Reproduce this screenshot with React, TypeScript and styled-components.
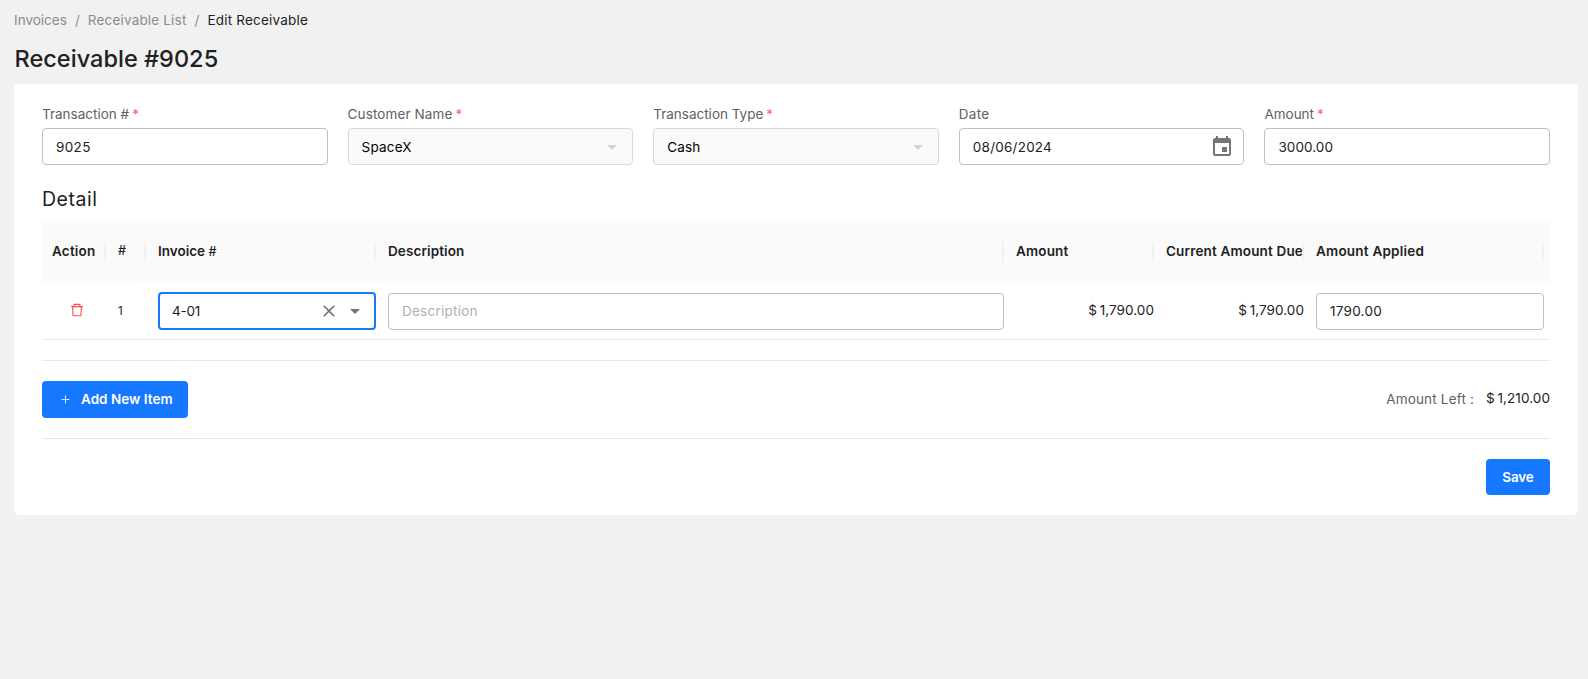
import React from 'react';
import styled, { createGlobalStyle, css } from 'styled-components';

const GlobalStyle = createGlobalStyle`
  * { box-sizing: border-box; }
  body {
    margin: 0;
    background: #f1f1f1;
    color: #212121;
    font-family: Inter, "Liberation Sans", sans-serif;
    font-size: 13.5px;
    line-height: 20px;
  }
`;

const Text = styled.span<{ $track?: number }>`
  letter-spacing: ${({ $track = 0 }) => $track}px;
  white-space: nowrap;
`;

const Page = styled.div`
  min-height: 679px;
  padding: 10px 10px 0 14px;
`;

const Breadcrumb = styled.nav`
  display: flex;
  height: 20px;
  color: #8c8c8c;
`;

const Separator = styled.span`
  width: 21px;
  text-align: center;
`;

const Current = styled(Text)`
  color: #212121;
`;

const Title = styled.h1`
  margin: 12px 0 0;
  padding-left: 0.5px;
  height: 42px;
  font-size: 23.5px;
  font-weight: 500;
  line-height: 33px;
  letter-spacing: 0.03px;
`;

const Card = styled.main`
  display: flex;
  flex-direction: column;
  height: 431px;
  padding: 20px 28px;
  border-radius: 5px;
  background: #fff;
`;

const FieldRow = styled.div`
  display: grid;
  grid-template-columns: repeat(5, 1fr);
  gap: 20px;
`;

const Field = styled.div`
  display: flex;
  flex-direction: column;
  gap: 4px;
`;

const Label = styled.label`
  display: flex;
  gap: 3px;
  height: 20px;
  color: #616161;
`;

const Required = styled.span`
  color: #ff6166;
`;

const Control = styled.div<{ $state?: 'disabled' | 'focused'; $raised?: boolean; $end?: number }>`
  display: flex;
  align-items: center;
  justify-content: space-between;
  height: 37px;
  padding: 0 ${({ $end = 8 }) => $end}px ${({ $raised }) => ($raised ? 2 : 0)}px 13px;
  border: 1px solid #bfbfbf;
  border-radius: 4px;
  background: #fff;
  ${({ $state }) => $state === 'disabled' && css`
    border-color: #d9d9d9;
    background: #fafafa;
    color: #000;
  `}
  ${({ $state }) => $state === 'focused' && css`
    height: 38px;
    margin-top: -1px;
    padding: 0 7px 0 12px;
    border: 2px solid #1677ff;
  `}
`;

const Icons = styled.span<{ $muted?: boolean }>`
  display: flex;
  align-items: center;
  gap: 4px;
  color: ${({ $muted }) => ($muted ? '#d3d3d3' : '#757575')};
`;

const Placeholder = styled(Text)`
  color: #b0b0b0;
`;

const SectionTitle = styled.h2`
  margin: 21px 0 0;
  height: 35px;
  font-size: 19.5px;
  font-weight: 400;
  line-height: 26px;
  letter-spacing: 0.55px;
`;

const columns = '64px 40px 230px 628px 150px 150px 1fr';

const HeaderRow = styled.div`
  display: grid;
  grid-template-columns: ${columns};
  align-items: center;
  height: 62px;
  padding-right: 6px;
  background: #fafafa;
  font-weight: 600;
`;

const HeaderCell = styled.div<{ $pad?: number }>`
  display: flex;
  align-items: flex-start;
  height: 20px;
  min-width: 0;
  overflow: hidden;
  padding-left: ${({ $pad = 12 }) => $pad}px;
  border-right: 2px solid #f1f1f1;
  line-height: 18px;
`;

const Hash = styled.span`
  font-size: 12.5px;
  font-weight: 500;
`;

const BodyRow = styled.div`
  display: grid;
  grid-template-columns: ${columns};
  height: 57px;
  padding: 10px 6px 0 0;
  border-bottom: 1px solid #ececec;
`;

const Cell = styled.div`
  padding-left: 12px;
`;

const ActionCell = styled.div`
  display: flex;
  justify-content: center;
  height: 34px;
  padding-left: 6px;
  align-items: center;
  color: #ff4d4f;
`;

const NumberCell = styled.div`
  padding: 8px 0 0 12px;
  font-size: 11.5px;
`;

const Money = styled(Text)`
  word-spacing: -1.2px;
`;

const MoneyCell = styled.div`
  padding-top: 7px;
  text-align: right;
`;

const Divider = styled.hr`
  width: 100%;
  height: 1px;
  margin: 20px 0;
  border: 0;
  background: #e6e8ee;
`;

const ActionBar = styled.div`
  display: flex;
  align-items: center;
  justify-content: space-between;
  height: 37px;
`;

const AddButton = styled.button`
  display: flex;
  align-items: center;
  gap: 11px;
  width: 146px;
  height: 37px;
  padding: 0 0 2px 19px;
  border: 0;
  border-radius: 4px;
  background: #1677ff;
  color: #fff;
  font: inherit;
  font-weight: 600;

  svg { margin-top: 1px; }
`;

const SaveButton = styled(AddButton)`
  justify-content: center;
  width: 64px;
  height: 36px;
  padding: 0;
`;

const Remaining = styled.div`
  display: flex;
  gap: 12px;
  padding-bottom: 2px;
`;

const RemainingLabel = styled(Text)`
  color: #616161;
`;

const RemainingValue = styled(Money)`
  margin-top: -1px;
`;

const Footer = styled.div`
  display: flex;
  justify-content: flex-end;
`;

const Arrow = () => (
  <svg width="24" height="24" viewBox="0 0 24 24" fill="currentColor"><path d="M7 10l5 5 5-5z" /></svg>
);
const Clear = () => (
  <svg width="20" height="20" viewBox="0 0 24 24" fill="currentColor">
    <path d="M19 6.41L17.59 5 12 10.59 6.41 5 5 6.41 10.59 12 5 17.59 6.41 19 12 13.41 17.59 19 19 17.59 13.41 12z" />
  </svg>
);
const Calendar = () => (
  <svg width="24" height="24" viewBox="0 0 24 24" fill="currentColor">
    <path d="M17 12h-5v5h5v-5zM16 1v2H8V1H6v2H5c-1.11 0-1.99.9-1.99 2L3 19c0 1.1.89 2 2 2h14c1.1 0 2-.9 2-2V5c0-1.1-.9-2-2-2h-1V1h-2zm3 18H5V8h14v11z" />
  </svg>
);
const Trash = () => (
  <svg width="14" height="14" viewBox="64 64 896 896" fill="currentColor">
    <path d="M360 184h-8c4.4 0 8-3.6 8-8v8h304v-8c0 4.4 3.6 8 8 8h-8v72h72v-80c0-35.3-28.7-64-64-64H352c-35.3 0-64 28.7-64 64v80h72v-72zm504 72H160c-17.7 0-32 14.3-32 32v32c0 4.4 3.6 8 8 8h60.4l24.7 523c1.6 34.1 29.8 61 63.9 61h454c34.2 0 62.3-26.8 63.9-61l24.7-523H888c4.4 0 8-3.6 8-8v-32c0-17.7-14.3-32-32-32zM731.3 840H292.7l-24.2-512h487l-24.2 512z" />
  </svg>
);
const Plus = () => (
  <svg width="9" height="9" viewBox="0 0 9 9" fill="none" stroke="currentColor" strokeOpacity=".85">
    <path d="M4.5 .5v8M.5 4.5h8" />
  </svg>
);

interface FormFieldProps {
  label: string;
  labelTrack?: number;
  value: string;
  track?: number;
  required?: boolean;
  kind?: 'text' | 'select' | 'date';
}

const FormField = ({ label, labelTrack, value, track, required, kind = 'text' }: FormFieldProps) => (
  <Field>
    <Label>
      <Text $track={labelTrack}>{label}</Text>
      {required && <Required>*</Required>}
    </Label>
    <Control $state={kind === 'select' ? 'disabled' : undefined} $end={kind === 'date' ? 9 : 8}>
      <Text $track={track}>{value}</Text>
      {kind === 'select' && <Icons $muted><Arrow /></Icons>}
      {kind === 'date' && <Icons><Calendar /></Icons>}
    </Control>
  </Field>
);

export default function App() {
  return (
    <Page>
      <GlobalStyle />
      <Breadcrumb>
        <Text>Invoices</Text>
        <Separator>/</Separator>
        <Text $track={0.18}>Receivable List</Text>
        <Separator>/</Separator>
        <Current $track={0.2}>Edit Receivable</Current>
      </Breadcrumb>
      <Title>Receivable #9025</Title>
      <Card>
        <FieldRow>
          <FormField label="Transaction #" value="9025" track={0.35} required />
          <FormField label="Customer Name" labelTrack={0.11} value="SpaceX" track={0.17} kind="select" required />
          <FormField label="Transaction Type" value="Cash" track={0.2} kind="select" required />
          <FormField label="Date" labelTrack={0.3} value="08/06/2024" track={0.23} kind="date" />
          <FormField label="Amount" value="3000.00" track={0.07} required />
        </FieldRow>

        <SectionTitle>Detail</SectionTitle>
        <HeaderRow>
          <HeaderCell $pad={10}><Text $track={0.2}>Action</Text></HeaderCell>
          <HeaderCell><Hash>#</Hash></HeaderCell>
          <HeaderCell><Text>Invoice <Hash>#</Hash></Text></HeaderCell>
          <HeaderCell><Text $track={0.1}>Description</Text></HeaderCell>
          <HeaderCell><Text $track={0.16}>Amount</Text></HeaderCell>
          <HeaderCell><Text $track={0.16}>Current Amount Due</Text></HeaderCell>
          <HeaderCell><Text $track={0.22}>Amount Applied</Text></HeaderCell>
        </HeaderRow>
        <BodyRow>
          <ActionCell><Trash /></ActionCell>
          <NumberCell>1</NumberCell>
          <Cell>
            <Control $state="focused">
              <Text $track={-0.2}>4-01</Text>
              <Icons><Clear /><Arrow /></Icons>
            </Control>
          </Cell>
          <Cell>
            <Control $raised><Placeholder $track={0.25}>Description</Placeholder></Control>
          </Cell>
          <MoneyCell><Money $track={0.06}>$ 1,790.00</Money></MoneyCell>
          <MoneyCell><Money $track={0.06}>$ 1,790.00</Money></MoneyCell>
          <Cell>
            <Control $raised><Text $track={0.27}>1790.00</Text></Control>
          </Cell>
        </BodyRow>

        <Divider />
        <ActionBar>
          <AddButton><Plus /><Text $track={0.03}>Add New Item</Text></AddButton>
          <Remaining>
            <RemainingLabel $track={0.18}>Amount Left :</RemainingLabel>
            <RemainingValue $track={0.08}>$ 1,210.00</RemainingValue>
          </Remaining>
        </ActionBar>
        <Divider />
        <Footer>
          <SaveButton><Text $track={-0.16}>Save</Text></SaveButton>
        </Footer>
      </Card>
    </Page>
  );
}
